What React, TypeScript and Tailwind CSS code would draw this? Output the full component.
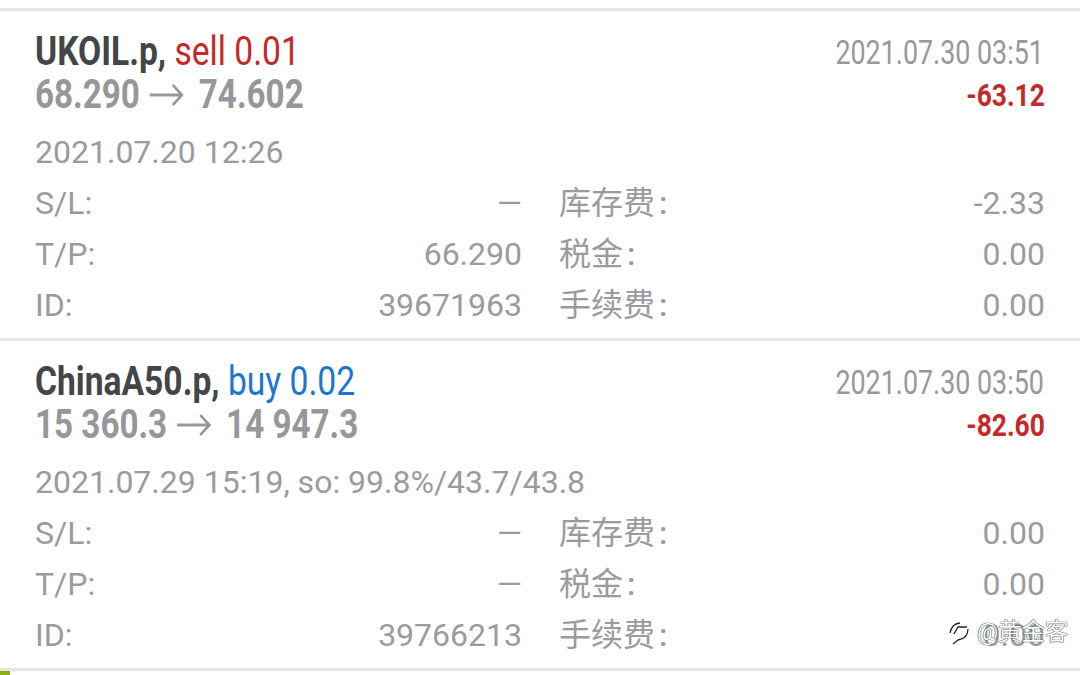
const font = { fontFamily: '"Roboto", "Noto Sans CJK SC", sans-serif' };

const trades = [
  {
    symbol: "UKOIL.p,",
    side: "sell 0.01",
    sideColor: "text-[#c62828]",
    prices: ["68.290", "74.602"],
    closed: "2021.07.30 03:51",
    profit: "-63.12",
    opened: "2021.07.20 12:26",
    sl: "—",
    tp: "66.290",
    id: "39671963",
    swap: "-2.33",
  },
  {
    symbol: "ChinaA50.p,",
    side: "buy 0.02",
    sideColor: "text-[#1976d2]",
    prices: ["15 360.3", "14 947.3"],
    closed: "2021.07.30 03:50",
    profit: "-82.60",
    opened: "2021.07.29 15:19, so: 99.8%/43.7/43.8",
    sl: "—",
    tp: "—",
    id: "39766213",
    swap: "0.00",
  },
];

function Row({ label, value, label2, value2 }: { label: string; value: string; label2: string; value2: string }) {
  return (
    <div className="flex h-[51px] items-center pb-[2px] text-[32px] text-[#9a9b9e]">
      <span className="w-[100px]">{label}</span>
      <span className="w-[387px] text-right">{value}</span>
      <span className="ml-[37px] flex-1">
        {label2}
        <span className="ml-[4px] font-medium">:</span>
      </span>
      <span className="text-right">{value2}</span>
    </div>
  );
}

function TradeCard({ t }: { t: (typeof trades)[number] }) {
  return (
    <div className="h-[327px] pl-[35px] pr-[35px] pt-[19px]">
      <div className="flex justify-between">
        <div>
          <div className="h-[43px] origin-left scale-x-[0.84] whitespace-nowrap text-[40px] leading-[43px]">
            <span className="font-bold text-[#444548]">{t.symbol}</span>{" "}
            <span className={t.sideColor}>{t.side}</span>
          </div>
          <div className="flex h-[43px] origin-left scale-x-[0.83] items-center whitespace-nowrap text-[40px] font-bold leading-[43px] text-[#96979a]">
            <span>{t.prices[0]}</span>
            <svg className="ml-[12px] mr-[18px]" width="41" height="24" viewBox="0 0 41 24" fill="none" stroke="#96979a" strokeWidth="3">
              <path d="M0 12H39M28 2L39 12L28 22" />
            </svg>
            <span>{t.prices[1]}</span>
          </div>
        </div>
        <div className="text-right">
          <div className="mr-[1px] h-[43px] origin-right scale-x-[0.79] whitespace-nowrap text-[34px] leading-[45px] text-[#97989b]">{t.closed}</div>
          <div className="h-[43px] origin-right scale-x-[0.825] whitespace-nowrap text-[32px] font-bold leading-[44px] text-[#c62828]">{t.profit}</div>
        </div>
      </div>
      <div className="mt-[11px] h-[51px] whitespace-nowrap text-[32px] leading-[51px] text-[#9a9b9e]">{t.opened}</div>
      <Row label="S/L:" value={t.sl} label2="库存费" value2={t.swap} />
      <Row label="T/P:" value={t.tp} label2="税金" value2="0.00" />
      <Row label="ID:" value={t.id} label2="手续费" value2="0.00" />
    </div>
  );
}

export default function App() {
  return (
    <div className="relative h-[675px] w-[1080px] overflow-hidden bg-white" style={font}>
      <div className="h-[8px]" />
      <div className="h-[3px] bg-[#e6e6e6]" />
      <TradeCard t={trades[0]} />
      <div className="h-[3px] bg-[#e6e6e6]" />
      <TradeCard t={trades[1]} />
      <div className="h-[3px] bg-[#e6e6e6]" />
      <div className="h-[4px] w-[10px] bg-[#8bb012]" />
      <div className="absolute left-[949px] top-[618px] flex items-center gap-[8px] text-[23.5px] leading-[28px] text-white [text-shadow:0_0_1px_#222,0_0_1px_#222]">
        <svg width="20" height="25" viewBox="0 0 20 25" fill="none" stroke="#222" strokeWidth="1.3">
          <path d="M1 13C2 7 6 3 11 3M5 14L9 7H18M19 9C19 15 15 19 9 20L4 24" />
        </svg>
        <span>@黄金客</span>
      </div>
    </div>
  );
}
